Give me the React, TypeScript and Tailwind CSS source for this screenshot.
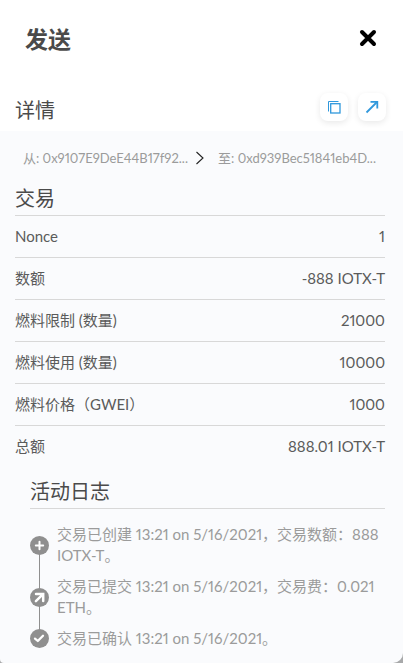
import React from "react";

type Detail = { label: string; value: string };

const details: Detail[] = [
  { label: "Nonce", value: "1" },
  { label: "数额", value: "-888 IOTX-T" },
  { label: "燃料限制 (数量)", value: "21000" },
  { label: "燃料使用 (数量)", value: "10000" },
  { label: "燃料价格（GWEI）", value: "1000" },
  { label: "总额", value: "888.01 IOTX-T" },
];

const badge = "relative size-[19px] shrink-0";

function CreatedIcon() {
  return (
    <svg className={badge} viewBox="0 0 19 19" aria-hidden="true">
      <circle cx="9.5" cy="9.5" r="9.5" fill="#8f8f8f" />
      <path d="M9.5 5.8v7.4M5.8 9.5h7.4" stroke="#fff" strokeWidth="2" strokeLinecap="round" />
    </svg>
  );
}

function SubmittedIcon() {
  return (
    <svg className={badge} viewBox="0 0 19 19" aria-hidden="true">
      <circle cx="9.5" cy="9.5" r="9.5" fill="#8f8f8f" />
      <path d="M6 5.9h7.2v7.2M12.8 6.3l-6.9 6.9" fill="none" stroke="#fff" strokeWidth="2.5" strokeLinecap="round" strokeLinejoin="miter" />
    </svg>
  );
}

function ConfirmedIcon() {
  return (
    <svg className={badge} viewBox="0 0 19 19" aria-hidden="true">
      <circle cx="9.5" cy="9.5" r="9.5" fill="#8f8f8f" />
      <path d="M5 9.6l2.8 2.4 5.2-5.2" fill="none" stroke="#fff" strokeWidth="2.3" strokeLinecap="round" strokeLinejoin="round" />
    </svg>
  );
}

const activities = [
  { text: "交易已创建 13:21 on 5/16/2021，交易数额：888 IOTX-T。", Icon: CreatedIcon },
  { text: "交易已提交 13:21 on 5/16/2021，交易费：0.021 ETH。", Icon: SubmittedIcon },
  { text: "交易已确认 13:21 on 5/16/2021。", Icon: ConfirmedIcon },
];

const iconButton =
  "flex size-7 items-center justify-center rounded-lg bg-white shadow-[0_2px_6px_rgba(0,0,0,0.09)]";

export default function App() {
  return (
    <div className="flex min-h-screen flex-col bg-[#a8a9aa] font-['Lato','Noto_Sans_CJK_SC',sans-serif] text-[#5b5b5b] proportional-nums">
      <main className="flex grow flex-col rounded-br-[10px] rounded-bl-[4px] bg-[#fafbfd]">
        <header className="bg-white pt-5">
          <div className="flex h-9 items-center justify-between pr-[26px] pl-[25px]">
            <h1 className="pt-[2px] text-[23px] leading-8 font-bold text-[#4a4a4a]">发送</h1>
            <button type="button" aria-label="关闭" className="flex size-[18px] items-center justify-center text-black">
              <svg className="size-[18px]" viewBox="0 0 18 18" aria-hidden="true">
                <path d="M3 3l12 12M15 3L3 15" stroke="currentColor" strokeWidth="4" strokeLinecap="round" />
              </svg>
            </button>
          </div>
          <div className="mt-[37px] flex items-start justify-between pr-[17px] pb-1 pl-[15px]">
            <h2 className="text-xl leading-[34px] text-[#4a4a4a]">详情</h2>
            <div className="flex gap-[10px]">
              <button type="button" aria-label="复制" className={iconButton}>
                <svg className="size-[14px]" viewBox="0 0 14 14" fill="none" aria-hidden="true">
                  <path d="M1.5 11.5V1.5h10" stroke="#3098dc" strokeWidth="1" />
                  <rect x="3.7" y="3.7" width="9.3" height="9.3" stroke="#3098dc" strokeWidth="1.3" />
                </svg>
              </button>
              <button type="button" aria-label="在浏览器中查看" className={iconButton}>
                <svg className="size-[14px]" viewBox="0 0 14 14" fill="none" aria-hidden="true">
                  <path d="M1.5 12.5L12 2" stroke="#3098dc" strokeWidth="1.8" />
                  <path d="M5.5 1.9h6.8v6.6" stroke="#3098dc" strokeWidth="1.8" />
                </svg>
              </button>
            </div>
          </div>
        </header>

        <div className="flex items-center pt-4 pr-[27px] pl-[23px] text-[13px] leading-[22px] text-[#9b9b9b]">
          <span className="grow basis-0 whitespace-nowrap">从: 0x9107E9DeE44B17f92...</span>
          <svg className="h-[14px] w-[9px] shrink-0" viewBox="0 0 9 14" fill="none" aria-hidden="true">
            <path d="M1.5 1L8 7l-6.5 6" stroke="#222" strokeWidth="1.1" />
          </svg>
          <span className="grow basis-0 text-right whitespace-nowrap">至: 0xd939Bec51841eb4D...</span>
        </div>

        <section className="pr-[18px] pl-[15px] pt-3">
          <h3 className="border-b border-[#d8d8d8] pt-px pb-px text-xl leading-8 text-[#4a4a4a]">交易</h3>
          <dl className="divide-y divide-[#d8d8d8] text-[15px] leading-[41px]">
            {details.map(({ label, value }) => (
              <div key={label} className="flex justify-between">
                <dt>{label}</dt>
                <dd>{value}</dd>
              </div>
            ))}
          </dl>
        </section>

        <section className="pr-[18px] pb-[14px] pl-[30px] pt-2">
          <h3 className="border-b border-[#d8d8d8] pb-px text-xl leading-8 text-[#4a4a4a]">活动日志</h3>
          <ol className="relative flex flex-col gap-[10px] pt-[15px] text-[15px] leading-[21px] text-[#9b9b9b]">
            <li aria-hidden="true" className="absolute top-9 bottom-[10px] left-[9px] w-px bg-[#8f8f8f]" />
            {activities.map(({ text, Icon }) => (
              <li key={text} className="flex items-center gap-2">
                <Icon />
                <span>{text}</span>
              </li>
            ))}
          </ol>
        </section>
      </main>
    </div>
  );
}
